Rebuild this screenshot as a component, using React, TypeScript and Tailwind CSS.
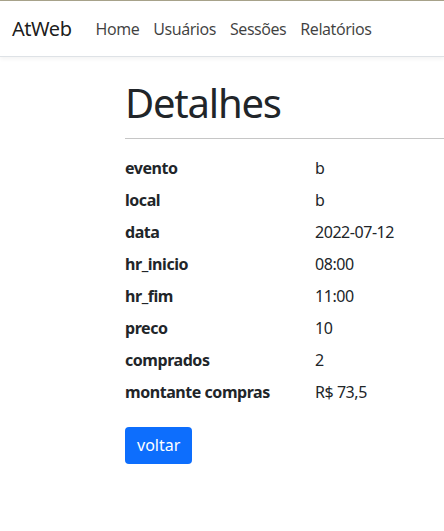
import React from 'react';

const rows: [string, string][] = [
  ['evento', 'b'],
  ['local', 'b'],
  ['data', '2022-07-12'],
  ['hr_inicio', '08:00'],
  ['hr_fim', '11:00'],
  ['preco', '10'],
  ['comprados', '2'],
  ['montante compras', 'R$ 73,5'],
];

export default function App() {
  return (
    <div className="min-h-[531px] bg-white text-[#212529] font-['Segoe_UI','Noto_Sans',sans-serif] text-base tracking-[-0.45px]">
      <div className="h-px bg-[#a8a38b]" />
      <nav className="h-[56px] flex items-center px-3 border-b border-[#dee2e6] shadow-[0_2px_4px_rgba(0,0,0,0.05)]">
        <span className="text-xl text-black/90 mr-[24px]">AtWeb</span>
        <div className="flex gap-[14px] text-black/75">
          <a>Home</a>
          <a>Usuários</a>
          <a>Sessões</a>
          <a>Relatórios</a>
        </div>
      </nav>
      <main className="ml-[125px]">
        <h1 className="text-[40px] leading-[1.2] font-normal mt-[22px] mb-[8px] tracking-[-1.2px]">Detalhes</h1>
        <hr className="border-t border-[#c6c6c6] mt-[11px] mb-[13px]" />
        <dl className="flex flex-col">
          {rows.map(([k, v]) => (
            <div key={k} className="flex h-[32px] items-center">
              <dt className="w-[190px] font-bold">{k}</dt>
              <dd>{v}</dd>
            </div>
          ))}
        </dl>
        <button className="mt-[19px] bg-[#0d6efd] text-white rounded-[4px] px-3 py-[6px] leading-[25px] tracking-normal">voltar</button>
      </main>
    </div>
  );
}
